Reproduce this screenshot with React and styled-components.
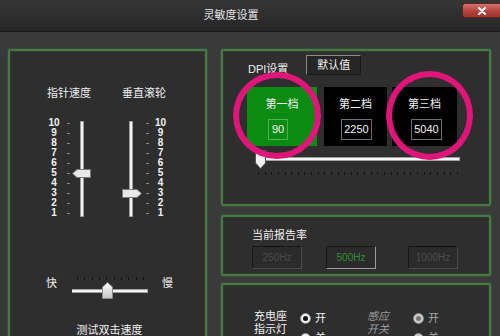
import React from 'react'
import styled, { createGlobalStyle } from 'styled-components'

const GlobalStyle = createGlobalStyle`
  html, body {
    margin: 0;
    padding: 0;
    background: #3a3a3a;
  }
  body {
    font-family: "Liberation Sans", "Noto Sans CJK SC", sans-serif;
  }
`

const cjk = `"Liberation Sans", "Noto Sans CJK SC", sans-serif`

const Window = styled.div`
  width: 500px;
  height: 336px;
  overflow: hidden;
  background: #3a3a3a;
  display: flex;
  flex-direction: column;
`

const TitleBar = styled.div`
  height: 31px;
  flex-shrink: 0;
  display: flex;
  background: linear-gradient(#363636, #262626);
  border-bottom: 1px solid #1c1c1c;
`

const Title = styled.div`
  flex: 1;
  text-align: center;
  font-family: ${cjk};
  font-size: 11px;
  line-height: 31px;
  color: #e6e6e6;
`

const CloseButton = styled.div`
  width: 37px;
  height: 13px;
  margin-top: 3px;
  display: flex;
  align-items: center;
  justify-content: center;
  background: linear-gradient(#d4726a, #b0403a 60%, #a3352f);
  border: 1px solid #5c2420;
  border-right: none;
  border-radius: 3px 0 0 3px;
`

const Content = styled.div`
  display: flex;
  padding: 17px 9px 0 8px;
  gap: 14px;
`

const Panel = styled.div`
  position: relative;
  box-sizing: border-box;
  background: #2e2e2e;
  border: 2px solid #4a7746;
  box-shadow: inset 0 0 0 1px #2a3d29, 0 0 0 1px #34503a;
  border-radius: 2px;
`

const LeftPanel = styled(Panel)`
  width: 199px;
  height: 300px;
  display: flex;
  flex-direction: column;
`

const RightColumn = styled.div`
  width: 270px;
  display: flex;
  flex-direction: column;
`

const Label = styled.div`
  font-family: ${cjk};
  font-size: 11px;
  line-height: 12px;
  color: ${p => p.$color || '#f0f0f0'};
  white-space: nowrap;
`

/* ---------- left panel: vertical sliders ---------- */

const SliderColumns = styled.div`
  display: flex;
  padding-left: 36px;
  margin-top: 36px;
  gap: 26px;
`

const SliderColumn = styled.div`
  width: 48px;
  display: flex;
  flex-direction: column;
`

const Heading = styled(Label)`
  text-align: center;
  margin-left: ${p => p.$shift || 0}px;
`

const VSliderRow = styled.div`
  display: flex;
  margin-top: 19px;
  margin-left: ${p => p.$indent || 0}px;
`

const Numbers = styled.div`
  width: 16px;
  display: flex;
  flex-direction: column;
`

const Num = styled.div`
  height: 10px;
  line-height: 10px;
  font-size: 10px;
  font-weight: bold;
  color: #f2f2f2;
  text-align: center;
`

const Dashes = styled.div`
  width: 3px;
  margin: 0 ${p => p.$right || 0}px 0 ${p => p.$left || 0}px;
  display: flex;
  flex-direction: column;
`

const Dash = styled.div`
  height: 10px;
  display: flex;
  align-items: center;
  &::after {
    content: '';
    width: 3px;
    height: 1px;
    background: #8a8a8a;
  }
`

const TrackHolder = styled.div`
  position: relative;
  width: 4px;
  height: 100px;
`

const VTrack = styled.div`
  margin-top: 3px;
  width: 2px;
  height: 94px;
  background: #f4f4f4;
  border: 1px solid #9a9a9a;
`

const Thumb = styled.svg`
  position: absolute;
  left: ${p => p.$left}px;
  top: ${p => p.$top}px;
`

const ThumbFill = () => (
  <defs>
    <linearGradient id="tg" x1="0" y1="0" x2="0" y2="1">
      <stop offset="0" stopColor="#ffffff" />
      <stop offset="1" stopColor="#c4c4c4" />
    </linearGradient>
  </defs>
)

const VSlider = ({ value, side }) => {
  const nums = [10, 9, 8, 7, 6, 5, 4, 3, 2, 1]
  const top = (10 - value) * 10 + 1
  const numbers = (
    <Numbers>
      {nums.map(n => <Num key={n}>{n}</Num>)}
    </Numbers>
  )
  const dashes = left => (
    <Dashes $left={left ? 5 : 13} $right={left ? 10 : 4}>
      {nums.map(n => <Dash key={n} />)}
    </Dashes>
  )
  const track = (
    <TrackHolder>
      <VTrack />
      {side === 'left' ? (
        <Thumb width="19" height="9" $left={-8} $top={top}>
          <polygon points="0.5,4.5 5,0.5 18.5,0.5 18.5,8.5 5,8.5" fill="#e8e8e8" stroke="#7a7a7a" />
        </Thumb>
      ) : (
        <Thumb width="20" height="9" $left={-7} $top={top}>
          <polygon points="0.5,0.5 15,0.5 19.5,4.5 15,8.5 0.5,8.5" fill="#e8e8e8" stroke="#7a7a7a" />
        </Thumb>
      )}
    </TrackHolder>
  )
  return side === 'left' ? (
    <VSliderRow>
      {numbers}
      {dashes(true)}
      {track}
    </VSliderRow>
  ) : (
    <VSliderRow $indent={9}>
      {track}
      {dashes(false)}
      {numbers}
    </VSliderRow>
  )
}

/* ---------- left panel: horizontal slider ---------- */

const HRow = styled.div`
  display: flex;
  align-items: flex-start;
  padding-left: 36px;
  margin-top: 57px;
`

const SideLabel = styled(Label)`
  margin-top: 2px;
  width: 11px;
`

const HSlider = styled.div`
  position: relative;
  width: 76px;
  height: 24px;
  margin: 0 14px 0 15px;
`

const TickRow = styled.div`
  position: absolute;
  left: ${p => p.$left}px;
  right: ${p => p.$right}px;
  top: ${p => p.$top}px;
  display: flex;
  justify-content: space-between;
`

const Tick = styled.div`
  width: 1px;
  height: 3px;
  background: ${p => p.$color || '#111'};
`

const HTrack = styled.div`
  position: absolute;
  left: 0;
  right: 0;
  top: ${p => p.$top}px;
  height: 2px;
  background: #f4f4f4;
  border: 1px solid #a0a0a0;
  border-left: none;
`

const FootLabel = styled(Label)`
  margin-top: 25px;
  text-align: center;
  padding-left: 4px;
`

/* ---------- DPI panel ---------- */

const DpiPanel = styled(Panel)`
  height: 157px;
`

const DpiHeader = styled.div`
  display: flex;
  align-items: flex-end;
  padding-left: 25px;
  margin-top: 4px;
`

const DefaultButton = styled.div`
  width: 53px;
  height: 18px;
  margin-left: 18px;
  font-family: ${cjk};
  font-size: 11px;
  line-height: 18px;
  text-align: center;
  color: #f2f2f2;
  background: #262626;
  border: 1px solid #8a8a8a;
  border-right-color: #1a1a1a;
  border-bottom-color: #1a1a1a;
`

const LevelRow = styled.div`
  display: flex;
  padding-left: 24px;
  margin-top: 12px;
`

const Level = styled.div`
  width: ${p => p.$w}px;
  height: 59px;
  margin-right: ${p => p.$gap}px;
  background: ${p => (p.$active ? '#0b8b12' : '#000')};
  display: flex;
  flex-direction: column;
  align-items: center;
  padding-top: 11px;
  box-sizing: border-box;
`

const LevelValue = styled.div`
  margin-top: 9px;
  margin-left: ${p => p.$shift || 0}px;
  height: 19px;
  padding: 0 2px;
  min-width: 14px;
  line-height: 19px;
  text-align: center;
  font-size: 11px;
  color: #f4f4f4;
  border: 1px solid ${p => (p.$active ? '#4fb04f' : '#6e6e6e')};
`

const DpiSlider = styled.div`
  position: relative;
  width: 202px;
  height: 20px;
  margin: 11px 0 0 35px;
`

const Ring = styled.div`
  position: absolute;
  left: ${p => p.$left}px;
  top: ${p => p.$top}px;
  width: ${p => p.$w}px;
  height: ${p => p.$h}px;
  box-sizing: border-box;
  border: 6px solid #e0157a;
  border-radius: 50%;
`

/* ---------- report rate panel ---------- */

const RatePanel = styled(Panel)`
  height: 61px;
  margin-top: 9px;
  padding: 12px 0 0 29px;
`

const RateRow = styled.div`
  display: flex;
  margin-top: 5px;
`

const RateButton = styled.div`
  box-sizing: border-box;
  width: 50px;
  height: 23px;
  margin-left: ${p => p.$gap || 0}px;
  font-size: 10px;
  line-height: 21px;
  text-align: center;
  color: ${p => (p.$active ? '#2f8f2f' : '#4c4c4c')};
  background: #2b2b2b;
  border: 1px solid ${p => (p.$active ? '#1a1a1a' : '#161616')};
  border-right-color: ${p => (p.$active ? '#9a9a9a' : '#4a4a4a')};
  border-bottom-color: ${p => (p.$active ? '#9a9a9a' : '#4a4a4a')};
`

/* ---------- bottom panel ---------- */

const BottomPanel = styled(Panel)`
  height: 80px;
  margin-top: 7px;
  display: flex;
  padding: 25px 0 0 31px;
`

const Group = styled.div`
  display: flex;
  margin-right: ${p => p.$gap || 0}px;
`

const GroupLabel = styled.div`
  font-family: ${cjk};
  font-size: 11px;
  line-height: 13px;
  color: ${p => (p.$dim ? '#9a9a9a' : '#f0f0f0')};
  font-style: ${p => (p.$dim ? 'italic' : 'normal')};
  width: 46px;
`

const Options = styled.div`
  display: flex;
  flex-direction: column;
  gap: 8px;
  padding-top: 2px;
`

const Option = styled.div`
  display: flex;
  align-items: center;
  gap: 4px;
  font-family: ${cjk};
  font-size: 11px;
  line-height: 12px;
  color: ${p => (p.$dim ? '#a8a8a8' : '#f0f0f0')};
`

const Radio = styled.div`
  width: 11px;
  height: 11px;
  box-sizing: border-box;
  border-radius: 50%;
  background: ${p => (p.$dim ? '#cfcfcf' : '#f6f6f6')};
  border: 1px solid #888;
  display: flex;
  align-items: center;
  justify-content: center;
  &::after {
    content: '';
    display: ${p => (p.$checked ? 'block' : 'none')};
    width: 5px;
    height: 5px;
    border-radius: 50%;
    background: ${p => (p.$dim ? '#777' : '#111')};
  }
`

const range = n => Array.from({ length: n }, (_, i) => i)

export default function App() {
  return (
    <>
      <GlobalStyle />
      <Window>
        <TitleBar>
          <Title>灵敏度设置</Title>
          <CloseButton>
            <svg width="10" height="8" viewBox="0 0 10 8">
              <path d="M2 1 L8 7 M8 1 L2 7" stroke="#fff" strokeWidth="2" strokeLinecap="round" />
            </svg>
          </CloseButton>
        </TitleBar>

        <Content>
          <LeftPanel>
            <SliderColumns>
              <SliderColumn>
                <Heading $shift={-2}>指针速度</Heading>
                <VSlider value={5} side="left" />
              </SliderColumn>
              <SliderColumn>
                <Heading>垂直滚轮</Heading>
                <VSlider value={3} side="right" />
              </SliderColumn>
            </SliderColumns>

            <HRow>
              <SideLabel>快</SideLabel>
              <HSlider>
                <TickRow $left={5} $right={4} $top={2}>
                  {range(10).map(i => <Tick key={i} />)}
                </TickRow>
                <HTrack $top={14} />
                <Thumb width="11" height="17" $left={30} $top={7}>
                  <ThumbFill />
                  <polygon points="0.5,5 5.5,0.5 10.5,5 10.5,16.5 0.5,16.5" fill="url(#tg)" stroke="#8a8a8a" />
                </Thumb>
              </HSlider>
              <SideLabel>慢</SideLabel>
            </HRow>

            <FootLabel>测试双击速度</FootLabel>
          </LeftPanel>

          <RightColumn>
            <DpiPanel>
              <DpiHeader>
                <Label>DPI设置</Label>
                <DefaultButton>默认值</DefaultButton>
              </DpiHeader>

              <LevelRow>
                <Level $w={70} $gap={7} $active>
                  <Label>第一档</Label>
                  <LevelValue $active $shift={-8}>90</LevelValue>
                </Level>
                <Level $w={63} $gap={5}>
                  <Label>第二档</Label>
                  <LevelValue $shift={2}>2250</LevelValue>
                </Level>
                <Level $w={65} $gap={0}>
                  <Label>第三档</Label>
                  <LevelValue $shift={4}>5040</LevelValue>
                </Level>
              </LevelRow>

              <DpiSlider>
                <HTrack $top={0} />
                <TickRow $left={0} $right={2} $top={15}>
                  {range(31).map(i => <Tick key={i} $color="#121212" />)}
                </TickRow>
                <Thumb width="11" height="19" $left={-3} $top={-7}>
                  <polygon points="0.5,0.5 10.5,0.5 10.5,13 5.5,18.5 0.5,13" fill="#f0f0f0" stroke="#555" />
                </Thumb>
              </DpiSlider>

              <Ring $left={10} $top={21} $w={88} $h={87} />
              <Ring $left={163} $top={20} $w={87} $h={89} />
            </DpiPanel>

            <RatePanel>
              <Label>当前报告率</Label>
              <RateRow>
                <RateButton>250Hz</RateButton>
                <RateButton $gap={24} $active>500Hz</RateButton>
                <RateButton $gap={32}>1000Hz</RateButton>
              </RateRow>
            </RatePanel>

            <BottomPanel>
              <Group $gap={41}>
                <GroupLabel>充电座<br />指示灯</GroupLabel>
                <Options>
                  <Option><Radio $checked />开</Option>
                  <Option><Radio />关</Option>
                </Options>
              </Group>
              <Group>
                <GroupLabel $dim>感应<br />开关</GroupLabel>
                <Options>
                  <Option $dim><Radio $dim $checked />开</Option>
                  <Option $dim><Radio $dim />关</Option>
                </Options>
              </Group>
            </BottomPanel>
          </RightColumn>
        </Content>
      </Window>
    </>
  )
}
